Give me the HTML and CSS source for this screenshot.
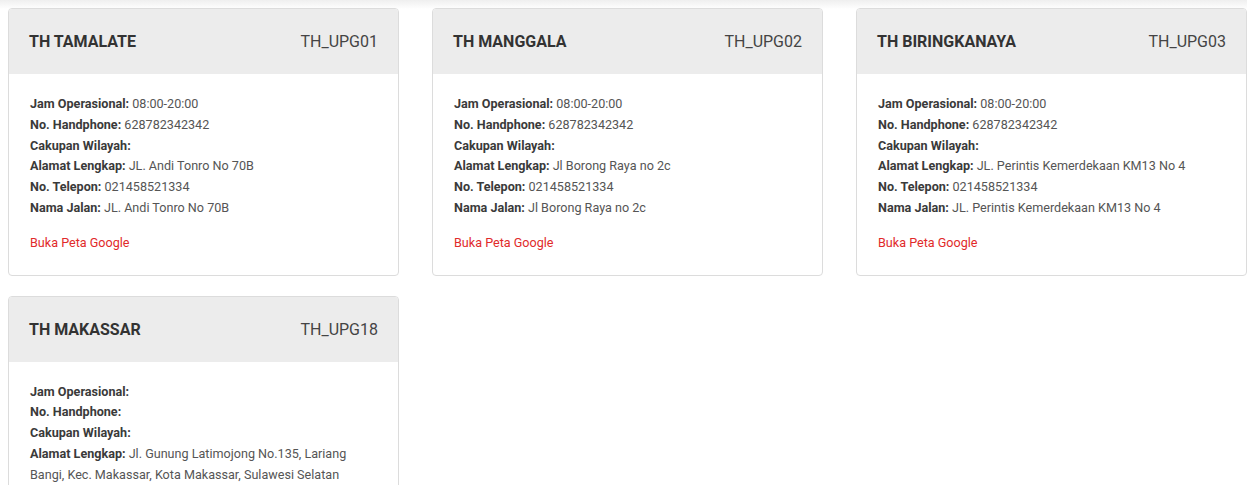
FILE: index.html
```html
<!DOCTYPE html>
<html lang="en">
<head>
    <meta charset="UTF-8">
    <meta name="viewport" content="width=device-width, initial-scale=1.0">
    <title>Daftar Toko</title>
    <link rel="stylesheet" href="styles.css">
</head>
<body>
    <div class="page">
        <div class="store-grid">
            <div class="store-card">
                <div class="store-head">
                    <h2>TH TAMALATE</h2>
                    <span class="store-code">TH_UPG01</span>
                </div>
                <div class="store-body">
                    <p><b>Jam Operasional:</b> 08:00-20:00</p>
                    <p><b>No. Handphone:</b> 628782342342</p>
                    <p><b>Cakupan Wilayah:</b></p>
                    <p><b>Alamat Lengkap:</b> JL. Andi Tonro No 70B</p>
                    <p><b>No. Telepon:</b> 021458521334</p>
                    <p><b>Nama Jalan:</b> JL. Andi Tonro No 70B</p>
                    <a class="map-link" href="#">Buka Peta Google</a>
                </div>
            </div>
            <div class="store-card">
                <div class="store-head">
                    <h2>TH MANGGALA</h2>
                    <span class="store-code">TH_UPG02</span>
                </div>
                <div class="store-body">
                    <p><b>Jam Operasional:</b> 08:00-20:00</p>
                    <p><b>No. Handphone:</b> 628782342342</p>
                    <p><b>Cakupan Wilayah:</b></p>
                    <p><b>Alamat Lengkap:</b> Jl Borong Raya no 2c</p>
                    <p><b>No. Telepon:</b> 021458521334</p>
                    <p><b>Nama Jalan:</b> Jl Borong Raya no 2c</p>
                    <a class="map-link" href="#">Buka Peta Google</a>
                </div>
            </div>
            <div class="store-card">
                <div class="store-head">
                    <h2>TH BIRINGKANAYA</h2>
                    <span class="store-code">TH_UPG03</span>
                </div>
                <div class="store-body">
                    <p><b>Jam Operasional:</b> 08:00-20:00</p>
                    <p><b>No. Handphone:</b> 628782342342</p>
                    <p><b>Cakupan Wilayah:</b></p>
                    <p><b>Alamat Lengkap:</b> JL. Perintis Kemerdekaan KM13 No 4</p>
                    <p><b>No. Telepon:</b> 021458521334</p>
                    <p><b>Nama Jalan:</b> JL. Perintis Kemerdekaan KM13 No 4</p>
                    <a class="map-link" href="#">Buka Peta Google</a>
                </div>
            </div>
            <div class="store-card">
                <div class="store-head">
                    <h2>TH MAKASSAR</h2>
                    <span class="store-code">TH_UPG18</span>
                </div>
                <div class="store-body">
                    <p><b>Jam Operasional:</b></p>
                    <p><b>No. Handphone:</b></p>
                    <p><b>Cakupan Wilayah:</b></p>
                    <p><b>Alamat Lengkap:</b> Jl. Gunung Latimojong No.135, Lariang Bangi, Kec. Makassar, Kota Makassar, Sulawesi Selatan</p>
                    <p><b>No. Telepon:</b></p>
                    <p><b>Nama Jalan:</b></p>
                    <a class="map-link" href="#">Buka Peta Google</a>
                </div>
            </div>
        </div>
    </div>
</body>
</html>
```

FILE: styles.css
```css
body{
    margin:0;
    overflow:hidden;
    background-color:#fff;
    font-family: Roboto, "Liberation Sans", Arial, sans-serif;
}
.page{
    padding:8px 0 0 8px;
    background:linear-gradient(to bottom, #efefef 0px, #f6f6f6 4px, #fff 9px);
}
.store-grid{
    display:grid;
    grid-template-columns: repeat(3, 391px);
    column-gap:33px;
    row-gap:20px;
}
.store-card{
    background-color:#fff;
    border:1px solid #dcdcdc;
    border-radius:4px;
    overflow:hidden;
}
.store-head{
    height:65px;
    padding:0 20px;
    display:flex;
    justify-content:space-between;
    align-items:center;
    background-color:#ececec;
}
.store-head h2{
    margin:0;
    font-size:16px;
    font-weight:700;
    color:#333;
}
.store-code{
    font-size:16px;
    color:#444;
}
.store-body{
    padding:20px 20px 21px 21px;
    font-size:12.6px;
    line-height:20.8px;
    color:#555;
}
.store-body p{
    margin:0;
}
.store-body b{
    color:#3a3a3a;
}
.map-link{
    display:inline-block;
    margin-top:14px;
    color:#e12a2a;
    text-decoration:none;
}
```
